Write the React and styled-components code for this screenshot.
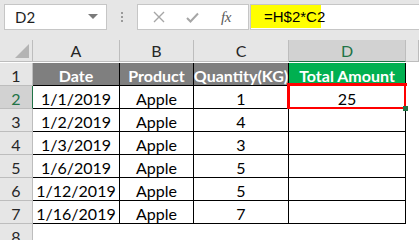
import React from 'react';
import styled, { createGlobalStyle } from 'styled-components';

const GlobalStyle = createGlobalStyle`
  html, body {
    margin: 0;
    padding: 0;
    background: #ffffff;
    overflow: hidden;
  }
  body {
    font-family: Lato, "Liberation Sans", sans-serif;
  }
`;

const Page = styled.div`
  width: 419px;
  height: 240px;
  overflow: hidden;
  background: #ffffff;
`;

const FormulaBar = styled.div`
  display: flex;
  align-items: flex-start;
  height: 40px;
  padding: 4px 0 0 4px;
  box-sizing: border-box;
  background: #e6e6e6;
`;

const NameBox = styled.div`
  display: flex;
  align-items: center;
  justify-content: space-between;
  width: 103px;
  height: 26px;
  box-sizing: border-box;
  padding: 0 8px 0 10px;
  background: #ffffff;
  border: 1px solid #c6c6c6;
  font-size: 15px;
  color: #1e1e1e;
`;

const Arrow = styled.span`
  width: 0;
  height: 0;
  border-left: 5px solid transparent;
  border-right: 5px solid transparent;
  border-top: 5px solid #7a7a7a;
  margin-bottom: 2px;
`;

const Grip = styled.div`
  width: 30px;
  height: 26px;
  display: flex;
  flex-direction: column;
  align-items: center;
  justify-content: center;
  gap: 2px;

  span {
    width: 2px;
    height: 2px;
    background: #9a9a9a;
  }
`;

const ButtonBox = styled.div`
  display: flex;
  align-items: center;
  width: 112px;
  height: 26px;
  box-sizing: border-box;
  background: #ffffff;
  border: 1px solid #c6c6c6;
`;

const IconSlot = styled.span`
  display: flex;
  align-items: center;
  justify-content: center;
  width: ${p => p.$w}px;
  height: 100%;
`;

const Fx = styled.span`
  font-family: "Liberation Serif", serif;
  font-style: italic;
  font-size: 15px;
  color: #5a5a5a;
  letter-spacing: -0.5px;
`;

const FormulaInput = styled.div`
  flex: 1;
  height: 26px;
  box-sizing: border-box;
  background: #ffffff;
  border: 1px solid #c6c6c6;
  border-right: none;
  margin-left: 1px;
  display: flex;
`;

const Highlight = styled.span`
  display: flex;
  align-items: center;
  width: 70px;
  height: 23px;
  padding-left: 13px;
  box-sizing: border-box;
  background: #ffff00;
  font-family: "Liberation Sans", Arial, sans-serif;
  font-size: 15px;
  color: #000000;
`;

const Sheet = styled.div`
  display: grid;
  grid-template-columns: 33px 87px 74px 95px 117px 1fr;
  grid-auto-rows: 23px;
`;

const HeadBase = styled.div`
  box-sizing: border-box;
  display: flex;
  align-items: center;
  justify-content: center;
  background: ${p => (p.$selected ? '#d2d2d2' : '#e6e6e6')};
  color: ${p => (p.$selected ? '#217346' : '#262626')};
  font-size: 16px;
`;

const Corner = styled(HeadBase)`
  height: 22px;
  border-right: 1px solid #bdbdbd;
  border-bottom: 1px solid #bdbdbd;
  justify-content: flex-end;
  align-items: flex-end;
  padding: 0 3px 3px 0;

  &::before {
    content: '';
    width: 0;
    height: 0;
    border-left: 14px solid transparent;
    border-bottom: 14px solid #b4b4b4;
  }
`;

const ColHead = styled(HeadBase)`
  height: 22px;
  border-right: 1px solid #bdbdbd;
  border-bottom: 1px solid ${p => (p.$selected ? '#217346' : '#bdbdbd')};
`;

const RowHead = styled(HeadBase)`
  border-right: 1px solid ${p => (p.$selected ? '#217346' : '#bdbdbd')};
  border-bottom: 1px solid #bdbdbd;
  padding-top: 2px;
`;

const tone = {
  head: { bg: '#7f7f7f', fg: '#ffffff', line: '#000000' },
  total: { bg: '#00b050', fg: '#ffffff', line: '#000000' },
  data: { bg: '#ffffff', fg: '#000000', line: '#000000' },
  empty: { bg: '#ffffff', fg: '#000000', line: 'transparent' },
};

const Cell = styled.div`
  position: relative;
  box-sizing: border-box;
  display: flex;
  align-items: center;
  justify-content: center;
  padding-top: 2px;
  background: ${p => tone[p.$tone].bg};
  color: ${p => tone[p.$tone].fg};
  border-right: 1px solid ${p => tone[p.$tone].line};
  border-bottom: 1px solid ${p => tone[p.$tone].line};
  font-size: 16px;
  font-weight: ${p => (p.$tone === 'head' || p.$tone === 'total' ? 700 : 400)};
  white-space: nowrap;
`;

const ActiveCell = styled(Cell)`
  &::after {
    content: '';
    position: absolute;
    top: -3px;
    left: -2px;
    right: -2px;
    bottom: -2px;
    border: 3px solid #ff0000;
  }

  &::before {
    content: '';
    position: absolute;
    right: -3px;
    bottom: -3px;
    width: 5px;
    height: 5px;
    background: #217346;
    z-index: 1;
  }
`;

const rows = [
  ['1/1/2019', 'Apple', '1', '25'],
  ['1/2/2019', 'Apple', '4', ''],
  ['1/3/2019', 'Apple', '3', ''],
  ['1/6/2019', 'Apple', '5', ''],
  ['1/12/2019', 'Apple', '5', ''],
  ['1/16/2019', 'Apple', '7', ''],
];

const columns = ['A', 'B', 'C', 'D'];

const CrossIcon = () => (
  <svg width="12" height="12" viewBox="0 0 12 12">
    <path d="M1 1 L11 11 M11 1 L1 11" stroke="#a6a6a6" strokeWidth="1.4" fill="none" />
  </svg>
);

const CheckIcon = () => (
  <svg width="13" height="11" viewBox="0 0 13 11">
    <path d="M1 6 L4.5 9.5 L12 1.5" stroke="#a6a6a6" strokeWidth="2" fill="none" />
  </svg>
);

const App = () => (
  <Page>
    <GlobalStyle />
    <FormulaBar>
      <NameBox>
        D2
        <Arrow />
      </NameBox>
      <Grip>
        <span />
        <span />
        <span />
      </Grip>
      <ButtonBox>
        <IconSlot $w={42}>
          <CrossIcon />
        </IconSlot>
        <IconSlot $w={24}>
          <CheckIcon />
        </IconSlot>
        <IconSlot $w={44}>
          <Fx>fx</Fx>
        </IconSlot>
      </ButtonBox>
      <FormulaInput>
        <Highlight>=H$2*C2</Highlight>
      </FormulaInput>
    </FormulaBar>

    <Sheet>
      <Corner />
      {columns.map(c => (
        <ColHead key={c} $selected={c === 'D'}>
          {c}
        </ColHead>
      ))}
      <ColHead />

      <RowHead>1</RowHead>
      <Cell $tone="head">Date</Cell>
      <Cell $tone="head">Product</Cell>
      <Cell $tone="head">Quantity(KG)</Cell>
      <Cell $tone="total">Total Amount</Cell>
      <Cell $tone="empty" />

      {rows.map((r, i) => (
        <React.Fragment key={i}>
          <RowHead $selected={i === 0}>{i + 2}</RowHead>
          <Cell $tone="data">{r[0]}</Cell>
          <Cell $tone="data">{r[1]}</Cell>
          <Cell $tone="data">{r[2]}</Cell>
          {i === 0 ? <ActiveCell $tone="data">{r[3]}</ActiveCell> : <Cell $tone="data">{r[3]}</Cell>}
          <Cell $tone="empty" />
        </React.Fragment>
      ))}

      <RowHead>8</RowHead>
      <Cell $tone="empty" />
      <Cell $tone="empty" />
      <Cell $tone="empty" />
      <Cell $tone="empty" />
      <Cell $tone="empty" />
    </Sheet>
  </Page>
);

export default App;
